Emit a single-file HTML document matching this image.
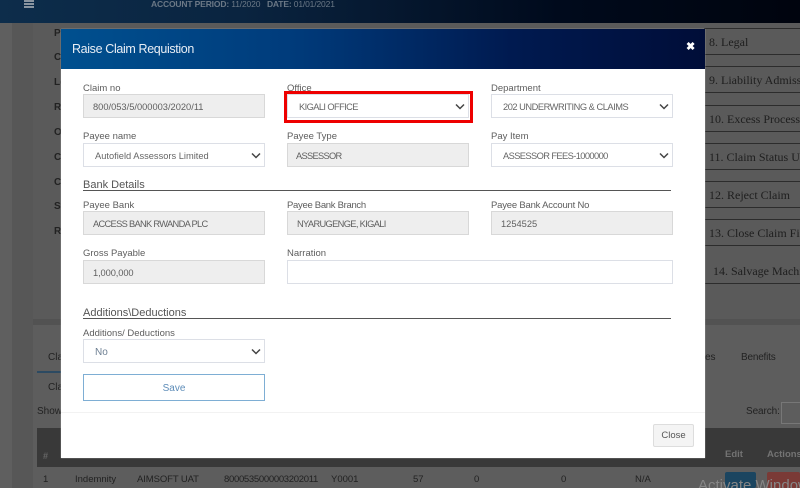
<!DOCTYPE html>
<html lang="en"><head><meta charset="utf-8"><title>Raise Claim Requistion</title>
<style>
html,body{margin:0;padding:0;width:800px;height:488px;overflow:hidden;background:#5a5a5a}
body{position:relative;font-family:"Liberation Sans",sans-serif;font-size:9.5px;color:#555;filter:blur(.35px)}
.a{position:absolute;white-space:nowrap}
.bg{color:#222}
.b{font-weight:bold;font-size:10px;color:#222}
.top{left:0;top:0;width:800px;height:23px;background:linear-gradient(90deg,#0d2d4b 0,#0a2440 30%,#000a1c 70%,#00040e 100%)}
.leg{left:704px;width:96px;height:27px;border-top:1px solid #2c2c2c;border-bottom:1px solid #2c2c2c;font-family:"Liberation Serif",serif;font-size:12px;color:#1e1e1e;line-height:27px;padding-left:5px;box-sizing:border-box;overflow:hidden}
.modal{left:61px;top:29px;width:644px;height:429px;background:#fff;box-shadow:0 0 1px #bbb}
.head{left:61px;top:29px;width:644px;height:40px;background:linear-gradient(90deg,#00508f 0,#003c7c 35%,#001a50 70%,#000d38 100%);color:#e8eef5;font-size:12.5px;letter-spacing:-.36px;line-height:41px;text-indent:11px}
.lab{font-size:9.5px;color:#5d5d5d;line-height:12px}
.inp{width:182px;height:24px;box-sizing:border-box;border:1px solid #dcdfe6;font-size:9.3px;line-height:24px;color:#5f5f5f;background:#fff;padding-left:9px}
.ro{background:#eee;border:1px solid #d8d8d8}
.sel{padding-left:11px;color:#666}
.sel svg{position:absolute;right:3px;top:8px}
.h{font-size:11px;color:#555;line-height:13px}
.ln{left:83px;width:588px;height:1px;background:#555}
</style></head><body>
<div class="a top"></div>
<div class="a" style="left:24px;top:0;width:10px;height:8px;background:linear-gradient(#8a95a0 0 2px,transparent 2px 3px,#8a95a0 3px 5px,transparent 5px 6px,#8a95a0 6px 8px)"></div>
<div class="a" style="left:151px;top:-2px;color:#6b7886;font-size:8.5px;letter-spacing:-.15px;line-height:12px"><b>ACCOUNT PERIOD:</b> 11/2020 &nbsp;&nbsp;<b>DATE:</b> 01/01/2021</div>

<div class="a" style="left:0;top:23px;width:12px;height:465px;background:#5f5f5f"></div>
<div class="a" style="left:12px;top:23px;width:21px;height:465px;background:#575757"></div>
<div class="a" style="left:33px;top:23px;width:767px;height:296px;background:#5a5a5a"></div>
<div class="a" style="left:33px;top:319px;width:767px;height:6px;background:#525252"></div>
<div class="a" style="left:33px;top:325px;width:767px;height:163px;background:#5d5d5d"></div>

<div class="a b" style="left:54px;top:28px">Po</div>
<div class="a b" style="left:54px;top:52px">Cl</div>
<div class="a b" style="left:54px;top:77px">Lo</div>
<div class="a b" style="left:54px;top:102px">Re</div>
<div class="a b" style="left:54px;top:127px">Or</div>
<div class="a b" style="left:54px;top:152px">Cr</div>
<div class="a b" style="left:54px;top:177px">Cc</div>
<div class="a b" style="left:54px;top:201px">St</div>
<div class="a b" style="left:54px;top:226px">Ri</div>

<div class="a leg" style="top:28px">8. Legal</div>
<div class="a leg" style="top:66px">9. Liability Admiss</div>
<div class="a leg" style="top:105px">10. Excess Process</div>
<div class="a leg" style="top:143px">11. Claim Status Up</div>
<div class="a leg" style="top:181px">12. Reject Claim</div>
<div class="a leg" style="top:219px">13. Close Claim Fil</div>
<div class="a leg" style="top:258px;height:26px;border-top:0;padding-left:9px">14. Salvage Machi</div>

<div class="a bg" style="left:48px;top:352px;font-size:10px">Cla</div>
<div class="a" style="left:37px;top:371px;width:24px;height:2px;background:#2c4a62"></div>
<div class="a bg" style="left:48px;top:382px;font-size:10px">Cla</div>
<div class="a bg" style="left:37px;top:406px;font-size:10px">Show</div>
<div class="a bg" style="left:705px;top:352px;font-size:10px">es</div>
<div class="a bg" style="left:741px;top:352px;font-size:10px;letter-spacing:-.2px">Benefits</div>
<div class="a bg" style="left:746px;top:406px;font-size:10px;letter-spacing:-.1px">Search:</div>
<div class="a" style="left:781px;top:402px;width:19px;height:22px;box-sizing:border-box;border:1px solid #777;border-right:0;background:#5d5d5d"></div>

<div class="a" style="left:37px;top:428px;width:763px;height:39px;background:#393939"></div>
<div class="a" style="left:43px;top:451px;color:#666;font-size:9px;font-weight:bold">#</div>
<div class="a" style="left:725px;top:449px;color:#737373;font-size:9.5px;font-weight:bold">Edit</div>
<div class="a" style="left:767px;top:449px;color:#737373;font-size:9.5px;font-weight:bold">Actions</div>

<div class="a bg" style="left:43px;top:474px">1</div>
<div class="a bg" style="left:75px;top:474px">Indemnity</div>
<div class="a bg" style="left:137px;top:474px;letter-spacing:-.1px">AIMSOFT UAT</div>
<div class="a bg" style="left:224px;top:474px;letter-spacing:-.3px">8000535000003202011</div>
<div class="a bg" style="left:331px;top:474px">Y0001</div>
<div class="a bg" style="left:413px;top:474px">57</div>
<div class="a bg" style="left:474px;top:474px">0</div>
<div class="a bg" style="left:561px;top:474px">0</div>
<div class="a bg" style="left:635px;top:474px">N/A</div>
<div class="a" style="left:725px;top:472px;width:31px;height:16px;background:#1b4560;border-radius:2px"></div>
<div class="a" style="left:767px;top:472px;width:33px;height:16px;background:#7a3a36;border-radius:2px"></div>
<div class="a" style="left:698px;top:477px;font-size:15px;color:#868686">Activate Windows</div>

<div class="a modal"></div>
<div class="a head">Raise Claim Requistion</div>
<div class="a" style="left:686px;top:40px;color:#fff;font-size:11px;font-weight:bold;line-height:14px">✖</div>

<div class="a lab" style="left:83px;top:83px">Claim no</div>
<div class="a inp ro" style="left:83px;top:94px">800/053/5/000003/2020/11</div>
<div class="a lab" style="left:287px;top:83px">Office</div>
<div class="a inp sel" style="left:287px;top:94px;letter-spacing:-.6px">KIGALI OFFICE<svg width="10" height="7" viewBox="0 0 10 7"><path d="M1 1.5l4 4 4-4" fill="none" stroke="#444" stroke-width="1.5"/></svg></div>
<div class="a" style="left:284px;top:91px;width:189px;height:32px;box-sizing:border-box;border:3px solid #ee0000"></div>
<div class="a lab" style="left:491px;top:83px">Department</div>
<div class="a inp sel" style="left:491px;top:94px;letter-spacing:-.48px">202 UNDERWRITING &amp; CLAIMS<svg width="10" height="7" viewBox="0 0 10 7"><path d="M1 1.5l4 4 4-4" fill="none" stroke="#444" stroke-width="1.5"/></svg></div>

<div class="a lab" style="left:83px;top:131px">Payee name</div>
<div class="a inp sel" style="left:83px;top:143px">Autofield Assessors Limited<svg width="10" height="7" viewBox="0 0 10 7"><path d="M1 1.5l4 4 4-4" fill="none" stroke="#444" stroke-width="1.5"/></svg></div>
<div class="a lab" style="left:287px;top:131px">Payee Type</div>
<div class="a inp ro" style="left:287px;top:143px;padding-left:8px;letter-spacing:-.7px">ASSESSOR</div>
<div class="a lab" style="left:491px;top:131px">Pay Item</div>
<div class="a inp sel" style="left:491px;top:143px;letter-spacing:-.6px">ASSESSOR FEES-1000000<svg width="10" height="7" viewBox="0 0 10 7"><path d="M1 1.5l4 4 4-4" fill="none" stroke="#444" stroke-width="1.5"/></svg></div>

<div class="a h" style="left:83px;top:179px">Bank Details</div>
<div class="a ln" style="top:190px"></div>

<div class="a lab" style="left:83px;top:200px">Payee Bank</div>
<div class="a inp ro" style="left:83px;top:211px;letter-spacing:-.69px">ACCESS BANK RWANDA PLC</div>
<div class="a lab" style="left:287px;top:200px;letter-spacing:-.3px">Payee Bank Branch</div>
<div class="a inp ro" style="left:287px;top:211px;letter-spacing:-.66px">NYARUGENGE, KIGALI</div>
<div class="a lab" style="left:491px;top:200px;letter-spacing:-.2px">Payee Bank Account No</div>
<div class="a inp ro" style="left:491px;top:211px">1254525</div>

<div class="a lab" style="left:83px;top:248px">Gross Payable</div>
<div class="a inp ro" style="left:83px;top:260px;letter-spacing:-.1px">1,000,000</div>
<div class="a lab" style="left:287px;top:248px">Narration</div>
<div class="a inp" style="left:287px;top:260px;width:386px"></div>

<div class="a h" style="left:83px;top:307px">Additions\Deductions</div>
<div class="a ln" style="top:318px"></div>

<div class="a lab" style="left:83px;top:328px">Additions/ Deductions</div>
<div class="a inp sel" style="left:83px;top:339px;color:#6d7f92;font-size:10px;line-height:25px">No<svg width="10" height="7" viewBox="0 0 10 7"><path d="M1 1.5l4 4 4-4" fill="none" stroke="#444" stroke-width="1.5"/></svg></div>

<div class="a" style="left:83px;top:374px;width:182px;height:27px;box-sizing:border-box;border:1px solid #7eaed4;color:#5d8cb8;font-size:10px;line-height:27px;text-align:center">Save</div>
<div class="a" style="left:61px;top:412px;width:644px;height:1px;background:#f2f2f2"></div>
<div class="a" style="left:653px;top:424px;width:41px;height:23px;box-sizing:border-box;border:1px solid #ddd;border-radius:2px;background:#f4f4f4;color:#555;font-size:9.5px;line-height:21px;text-align:center">Close</div>
</body></html>
